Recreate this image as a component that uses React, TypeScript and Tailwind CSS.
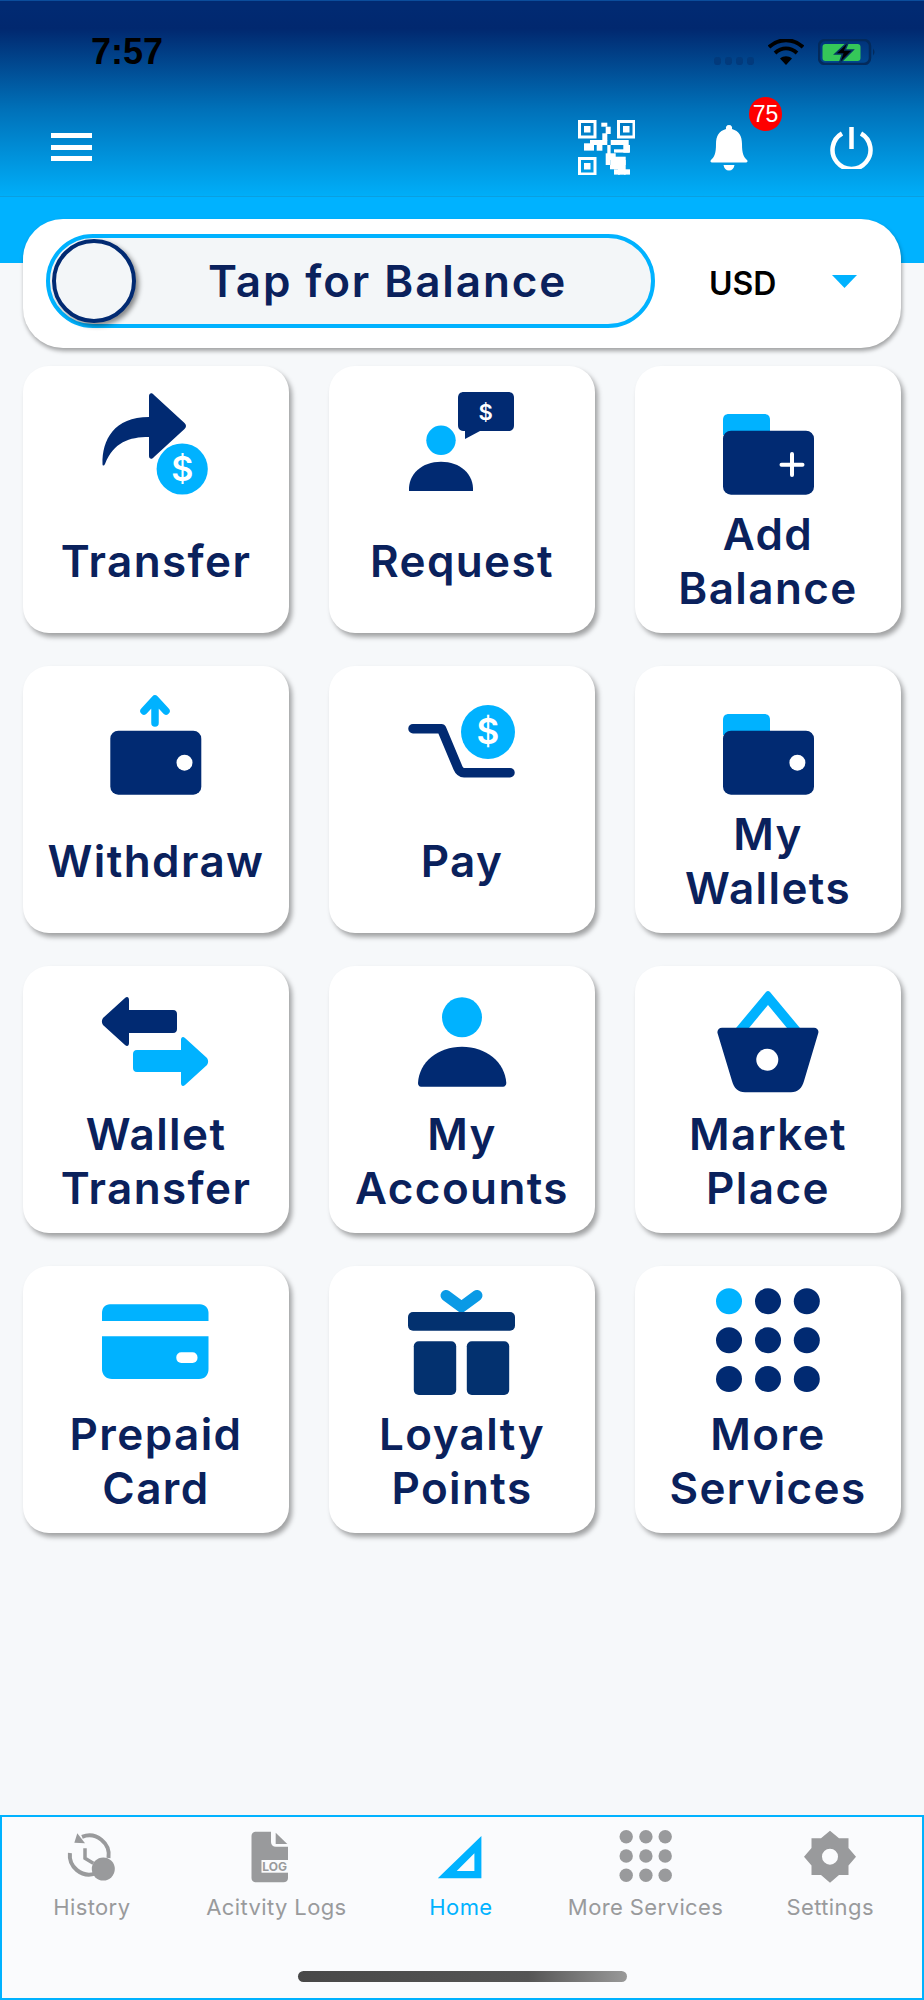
import React from 'react';

const NAVY = '#012a72';
const CYAN = '#00b2ff';
const GRAY = '#999a9c';

const Dollar = ({ x, y, size }: { x: number; y: number; size: number }) => (
  <text x={x} y={y} fill="#fff" fontSize={size} fontWeight={600} textAnchor="middle" fontFamily="Inter, sans-serif">$</text>
);

const Box = ({ children }: { children: React.ReactNode }) => (
  <svg viewBox="0 0 107 107" className="w-[107px] h-[107px] -ml-[0.5px] overflow-visible">{children}</svg>
);

const Wallet = ({ x = 9 }: { x?: number }) => (
  <rect x={x} y={40.7} width={91} height={64} rx={8} fill={NAVY} />
);

const TransferIcon = () => (
  <Box>
    <path d="M47 6C47 3 50 2 52 5L82.5 33C84.5 35 84.5 37 82.5 39L52 67C50 70 47 69 47 66V47C27 47 12 52 3 74C2 76 .5 76 .5 74C0 50 12 27 47 27Z" fill={NAVY} />
    <circle cx={80.2} cy={79} r={25.6} fill={CYAN} />
    <Dollar x={80.2} y={91} size={34} />
  </Box>
);

const RequestIcon = () => (
  <Box>
    <path d="M56 2H100C104 2 106 4 106 8V35C106 39 104 41 100 41H72L57 49V41C52 41 50 39 50 35V8C50 4 52 2 56 2Z" fill={NAVY} />
    <Dollar x={77.6} y={30} size={22} />
    <circle cx={33} cy={50.3} r={14.7} fill={CYAN} />
    <path d="M1 101C0 84 14 71.7 33 71.7C52 71.7 66 84 65 101Z" fill={NAVY} />
  </Box>
);

const AddBalanceIcon = () => (
  <Box>
    <path d="M9 45V30C9 26 11 24 15 24H50C54 24 56 26 56 30V45Z" fill={CYAN} />
    <Wallet />
    <path d="M78 64V85M67.5 74.7H88.5" stroke="#fff" strokeWidth={4} strokeLinecap="round" />
  </Box>
);

const WithdrawIcon = () => (
  <Box>
    <Wallet x={8.3} />
    <circle cx={82.5} cy={72.7} r={8} fill="#fff" />
    <path d="M53 33V10M42 21L53 9L64 21" stroke={CYAN} strokeWidth={7.5} strokeLinecap="round" strokeLinejoin="round" fill="none" />
  </Box>
);

const PayIcon = () => (
  <Box>
    <path d="M5 38.7H33.5L50 78Q52 82.7 56 82.7H102" stroke={NAVY} strokeWidth={9.5} strokeLinecap="round" strokeLinejoin="round" fill="none" />
    <circle cx={80} cy={42} r={27} fill={CYAN} />
    <Dollar x={80} y={54} size={35} />
  </Box>
);

const MyWalletsIcon = () => (
  <Box>
    <path d="M9 45V30C9 26 11 24 15 24H50C54 24 56 26 56 30V45Z" fill={CYAN} />
    <Wallet />
    <circle cx={83.4} cy={72.7} r={8} fill="#fff" />
  </Box>
);

const WalletTransferIcon = () => (
  <Box>
    <path d="M1 28L23 8C25 6 27 7 27 10V20H71C74 20 75 22 75 24V39C75 41 74 43 71 43H27V53C27 56 25 57 23 55L1 35C-.5 33 -.5 30 1 28Z" fill={NAVY} />
    <path d="M105 68L83 48C81 46 79 47 79 50V60H35C32 60 31 62 31 64V78C31 80 32 82 35 82H79V93C79 96 81 97 83 95L105 75C106.500 73 106.500 70 105 68Z" fill={CYAN} />
  </Box>
);

const AccountsIcon = () => (
  <Box>
    <circle cx={54} cy={27.300} r={20} fill={CYAN} />
    <path d="M10 93C11 72 30 56.700 54 56.700C78 56.700 97 72 98.300 93C98.300 95 97 96.700 95 96.700H13C11 96.700 10 95 10 93Z" fill={NAVY} />
  </Box>
);

const MarketIcon = () => (
  <Box>
    <path d="M22 38L52 2Q54 0 56 2L86 38H73L54 15L35 38Z" fill={CYAN} />
    <path d="M8 37.700H100C103 37.700 105 40 104.300 43L90 91C88 98 84 102.300 77 102.300H31C24 102.300 20 98 18 91L3.500 43C3 40 5 37.700 8 37.700Z" fill={NAVY} />
    <circle cx={53.300} cy={69.700} r={11} fill="#fff" />
  </Box>
);

const CardIcon = () => (
  <Box>
    <path d="M8 14.300H98C103 14.300 106.500 18 106.500 23V31H0V23C0 18 3 14.300 8 14.300Z" fill={CYAN} />
    <path d="M0 46.300H106.500V79C106.500 85 103 89 97 89H10C4 89 0 85 0 79Z" fill={CYAN} />
    <rect x={74.300} y={62.300} width={21.200} height={10.700} rx={5} fill="#fff" />
  </Box>
);

const GiftIcon = () => (
  <Box>
    <path d="M38 5.500L53.500 17L69 5.500" stroke="#0a9ae6" strokeWidth={11} strokeLinecap="round" strokeLinejoin="miter" fill="none" />
    <rect x={0} y={22} width={107} height={18.700} rx={5} fill="#03316f" />
    <rect x={5.800} y={51.300} width={42.400} height={53.700} rx={5} fill="#03316f" />
    <rect x={58.800} y={51.300} width={42.400} height={53.700} rx={5} fill="#03316f" />
  </Box>
);

const DotsIcon = () => (
  <Box>
    {[11.300, 50.300, 89].map((cy, r) =>
      [15, 54, 92.800].map((cx, c) => (
        <circle key={`${r}-${c}`} cx={cx} cy={cy} r={13} fill={r === 0 && c === 0 ? CYAN : NAVY} />
      ))
    )}
  </Box>
);

const services = [
  { lines: ['Transfer'], Icon: TransferIcon },
  { lines: ['Request'], Icon: RequestIcon },
  { lines: ['Add', 'Balance'], Icon: AddBalanceIcon },
  { lines: ['Withdraw'], Icon: WithdrawIcon },
  { lines: ['Pay'], Icon: PayIcon },
  { lines: ['My', 'Wallets'], Icon: MyWalletsIcon },
  { lines: ['Wallet', 'Transfer'], Icon: WalletTransferIcon },
  { lines: ['My', 'Accounts'], Icon: AccountsIcon },
  { lines: ['Market', 'Place'], Icon: MarketIcon },
  { lines: ['Prepaid', 'Card'], Icon: CardIcon },
  { lines: ['Loyalty', 'Points'], Icon: GiftIcon },
  { lines: ['More', 'Services'], Icon: DotsIcon },
];

const NavSvg = ({ children }: { children: React.ReactNode }) => (
  <svg viewBox="0 0 54 54" className="w-[54px] h-[54px]" fill={GRAY}>{children}</svg>
);

const tabs = [
  {
    label: 'History',
    icon: (
      <NavSvg>
        <path d="M17 6.900A19.500 19.500 0 0 1 43.500 28M4.900 23A19.500 19.500 0 0 0 30 43.700" stroke={GRAY} strokeWidth={4} fill="none" />
        <path d="M12.300 3.300L9.300 12.700L20 13.300Z" />
        <path d="M20 18.300V28.300L28.300 33.300" stroke={GRAY} strokeWidth={3.500} fill="none" />
        <circle cx={38.300} cy={39} r={11.500} />
      </NavSvg>
    ),
  },
  {
    label: 'Acitvity Logs',
    icon: (
      <NavSvg>
        <path d="M7 1.700H22V12C22 15 24 16.700 27 16.700H39V48C39 51 37 52.300 34.500 52.300H7C4 52.300 2.500 50.500 2.500 48V6C2.500 3.500 4 1.700 7 1.700Z" />
        <path d="M26.700 2.700L38.300 14H26.700Z" />
        <rect x={12.500} y={30} width={26.500} height={12.700} fill="#fafbfd" />
        <text x={25.700} y={40.500} fontSize={12} fontWeight={700} textAnchor="middle" fontFamily="Inter, sans-serif">LOG</text>
      </NavSvg>
    ),
  },
  {
    label: 'Home',
    active: true,
    icon: (
      <NavSvg>
        <path fillRule="evenodd" d="M3.800 48.300L47.400 6V48.300ZM22.700 41H40.400V23.300Z" fill={CYAN} />
      </NavSvg>
    ),
  },
  {
    label: 'More Services',
    icon: (
      <NavSvg>
        {[6.700, 26, 45.300].map((cy) =>
          [7.200, 26.900, 46.200].map((cx) => <circle key={`${cx}-${cy}`} cx={cx} cy={cy} r={6.700} />)
        )}
      </NavSvg>
    ),
  },
  {
    label: 'Settings',
    icon: (
      <NavSvg>
        <path
          fillRule="evenodd"
          d="M27 .7L36 8.300H45.500V18L53 26.700L45.500 35.500V45H36L27 52.700L18 45H8.500V35.500L1 26.700L8.500 18V8.300H18ZM27 18.700A8 8 0 1 0 27 34.700A8 8 0 1 0 27 18.700Z"
        />
      </NavSvg>
    ),
  },
];

// rough modules of the QR code, x/y/w/h in px
const qrData = [
  [23.3, 2.7, 6, 4], [27.7, 6.7, 5, 7.3], [24.3, 13.3, 5, 7.3], [12, 20, 17.3, 5], [6, 23.3, 10, 7.3],
  [18.7, 25, 5.7, 5.7], [32.7, 20, 18, 5], [45.3, 25, 6.7, 7.7], [36, 29.3, 15, 3.3], [29.3, 25, 3.3, 10],
  [27.7, 33.3, 10, 6.7], [32.7, 36.7, 15, 8.3], [27.7, 40, 5, 5], [40, 40, 7.7, 14.7], [32, 45, 9, 4.3],
  [36, 49.3, 6, 5.3], [46, 49.3, 6, 5.3],
];

const QrIcon = () => (
  <svg viewBox="0 0 57 55" className="w-[57px] h-[55px]" fill="#fff">
    {[[0, 0], [39, 0], [0, 37]].map(([x, y]) => (
      <g key={`${x}-${y}`}>
        <rect x={x + 1.500} y={y + 1.500} width={15.500} height={15.500} fill="none" stroke="#fff" strokeWidth={3} />
        <rect x={x + 6} y={y + 6} width={6.500} height={6.500} />
      </g>
    ))}
    {qrData.map(([x, y, w, h]) => (
      <rect key={`${x}-${y}`} x={x} y={y} width={w} height={h} />
    ))}
  </svg>
);

export default function App() {
  return (
    <div className="w-[924px] h-[2000px] flex flex-col bg-[#f6f8fa] font-['Inter',sans-serif] overflow-hidden">
      {/* header */}
      <div className="h-[197px] shrink-0 flex flex-col border-t border-b border-t-[#0b4d9c] border-b-[#0a9fe0] bg-[linear-gradient(#012a72_4%,#01286f_14%,#0070b8_55%,#00aef8_100%)]">
        <div className="h-[49px] mt-[26px] flex items-center pl-[91px]">
          <span className="text-[36px] font-semibold text-black font-['Liberation_Sans',sans-serif]">7:57</span>
          <div className="ml-auto flex items-center">
            <div className="flex gap-[4px] mt-[18px]">
              <span className="w-[7px] h-[8px] rounded-[3px] bg-[#023a7c]" />
              <span className="w-[7px] h-[8px] rounded-[3px] bg-[#023a7c]" />
              <span className="w-[7px] h-[8px] rounded-[3px] bg-[#023a7c]" />
              <span className="w-[7px] h-[8px] rounded-[3px] bg-[#023a7c]" />
            </div>
            <svg viewBox="0 0 36 26" className="w-[36px] h-[26px] ml-[14px]">
              <path d="M1 8C11 -1 25 -1 35 8M7 14C14 8 22 8 29 14" stroke="#000" strokeWidth={4} fill="none" />
              <path d="M12 19.500C15.500 16.500 20.500 16.500 24 19.500L18 26Z" fill="#000" />
            </svg>
            <svg viewBox="0 0 60 26" className="w-[60px] h-[26px] ml-[14px] mr-[46px]">
              <rect x={1} y={1} width={51} height={24} rx={6} fill="none" stroke="#032a5c" strokeWidth={2.500} />
              <path d="M55 9.500V16.500Q58 13 55 9.500Z" fill="#032a5c" />
              <rect x={4.500} y={5} width={38} height={17} rx={3} fill="#35c759" />
              <path d="M31 2L17 15H24.500L21 25L35 11H27Z" fill="#000" stroke="#053463" strokeWidth={1.500} />
            </svg>
          </div>
        </div>
        <div className="flex-1 flex items-start pl-[51px] relative">
          <div className="mt-[57px] w-[41px] flex flex-col gap-[6.500px]">
            <span className="h-[5px] bg-white" />
            <span className="h-[5px] bg-white" />
            <span className="h-[5px] bg-white" />
          </div>
          <div className="ml-[486px] mt-[44px]">
            <QrIcon />
          </div>
          <div className="ml-[75px] mt-[49px]">
            <svg viewBox="0 0 38 46" className="w-[38px] h-[46px]" fill="#fff">
              <path d="M19 0C21.500 0 22.500 2 22 4C29 6 32 11 32 19C32 28 33.500 32 37 35C38 36 37.500 37.500 36 37.500H2C.5 37.500 0 36 1 35C4.500 32 6 28 6 19C6 11 9 6 16 4C15.500 2 16.500 0 19 0Z" />
              <path d="M13.500 40H24.500C24 43.500 22 45.500 19 45.500C16 45.500 14 43.500 13.500 40Z" />
            </svg>
          </div>
          <div className="ml-[82px] mt-[50px]">
            <svg viewBox="0 0 43 43" className="w-[43px] h-[43px]" fill="none" stroke="#fff" strokeWidth={4.500}>
              <path d="M12 7.500A19 19 0 1 0 31 7.500" />
              <path d="M21.500 1V23" />
            </svg>
          </div>
          <span className="absolute left-[749px] top-[21px] w-[33px] h-[34px] rounded-full bg-[#fe0000] flex items-center justify-center text-white text-[23px] font-['Liberation_Sans',sans-serif]">75</span>
        </div>
      </div>

      {/* balance */}
      <div className="shrink-0 px-[23px] pt-[22px] bg-[linear-gradient(#00b2ff_66px,#f6f8fa_66px)]">
        <div className="h-[129px] bg-white rounded-[40px] shadow-[1px_3px_4px_rgba(0,0,0,0.35)] flex items-start pt-[15px] pl-[23px]">
          <div className="w-[609px] h-[94px] rounded-full border-4 border-[#00b2ff] bg-[#f3f6f8] flex items-center pl-[2px]">
            <span className="w-[84px] h-[84px] shrink-0 rounded-full border-[4px] border-[#012a72] bg-[#f3f6f8] shadow-[3px_3px_5px_rgba(0,0,0,0.45)]" />
            <span className="ml-[72px] text-[44px] font-semibold text-[#0a215c] tracking-[1.9px]">Tap for Balance</span>
          </div>
          <span className="ml-[54px] mt-[26px] text-[32px] font-semibold text-black">USD</span>
          <svg viewBox="0 0 25 13" className="w-[25px] h-[13px] ml-[56px] mt-[41px]">
            <path d="M0 0H25L12.500 13Z" fill="#00b2ff" />
          </svg>
        </div>
      </div>

      {/* services */}
      <div className="grid grid-cols-3 gap-x-10 gap-y-[33px] px-[23px] mt-[18px]">
        {services.map(({ lines, Icon }) => (
          <div key={lines.join(' ')} className="h-[267px] bg-white rounded-[26px] shadow-[3px_4px_5px_rgba(0,0,0,0.35)] flex flex-col items-center pt-6">
            <Icon />
            <div className="mt-2.5 h-[108px] flex flex-col items-center justify-center text-[44px] leading-[54px] font-semibold text-[#0a215c] tracking-[1.4px]">
              {lines.map((l) => (
                <span key={l}>{l}</span>
              ))}
            </div>
          </div>
        ))}
      </div>

      {/* tab bar */}
      <div className="mt-auto h-[185px] shrink-0 border-2 border-[#00b2ff] bg-[#fafbfd] flex flex-col items-center">
        <div className="grid grid-cols-5 w-[923px] -ml-[2px] pt-[13px]">
          {tabs.map((t) => (
            <div key={t.label} className="flex flex-col items-center">
              {t.icon}
              <span className={`mt-[10px] text-[22px] leading-[26px] tracking-[0.4px] ${t.active ? 'text-[#00b2ff]' : 'text-[#999a9c]'}`}>{t.label}</span>
            </div>
          ))}
        </div>
        <div className="mt-auto mb-[16px] w-[329px] h-[11px] rounded-full bg-[linear-gradient(90deg,#484848,#555_70%,#999)]" />
      </div>
    </div>
  );
}
